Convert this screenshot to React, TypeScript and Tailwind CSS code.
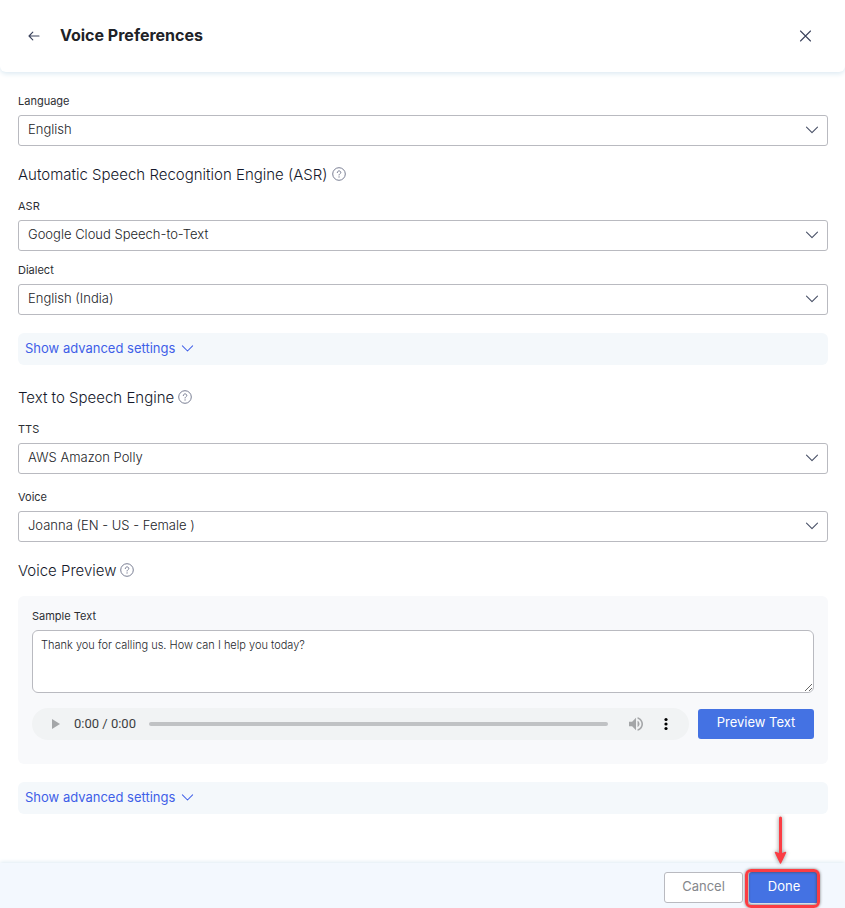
import { useState } from 'react'
import type { ReactNode } from 'react'

interface SelectFieldProps {
  id: string
  label: string
  options: string[]
}

function ChevronIcon({ className }: { className: string }) {
  return (
    <svg viewBox="0 0 14 14" fill="none" className={className} aria-hidden="true">
      <path d="M1.500 4.200 7 9.700l5.500-5.500" stroke="currentColor" strokeWidth="1.1" strokeLinecap="round" strokeLinejoin="round" />
    </svg>
  )
}

function HelpIcon() {
  return (
    <svg viewBox="0 0 14 14" fill="none" className="block size-[14px] text-[#6b7088]" aria-hidden="true">
      <circle cx="7" cy="7" r="6.300" stroke="currentColor" strokeWidth="0.9" />
      <path
        d="M5.300 5.600c0-1 .8-1.700 1.750-1.700s1.750.7 1.750 1.600c0 1.200-1.750 1.250-1.750 2.500"
        stroke="currentColor"
        strokeWidth="0.9"
        strokeLinecap="round"
      />
      <circle cx="7.050" cy="9.900" r="0.600" fill="currentColor" />
    </svg>
  )
}

function SelectField({ id, label, options }: SelectFieldProps) {
  const [value, setValue] = useState(options[0])

  return (
    <div>
      <label htmlFor={id} className="block text-[11px] leading-4 text-[#2c2e33]">
        {label}
      </label>
      <div className="relative mt-1.5">
        <select
          id={id}
          value={value}
          onChange={(e) => setValue(e.target.value)}
          className="block h-[31px] w-full appearance-none rounded-[3px] border border-[#b9bac0] bg-white pr-8 pb-0.5 pl-[9px] text-[13px] font-light text-[#222428] focus:border-[#4472e3] focus:outline-none"
        >
          {options.map((option) => (
            <option key={option} value={option}>
              {option}
            </option>
          ))}
        </select>
        <ChevronIcon className="pointer-events-none absolute top-2 right-[9px] size-[14px] text-[#4a5268]" />
      </div>
    </div>
  )
}

function SectionHeading({ children }: { children: ReactNode }) {
  return (
    <div className="flex items-center gap-1">
      <h2 className="text-[15px] leading-5 font-light text-[#15192b]">{children}</h2>
      <button type="button" aria-label="Help" className="pb-0.5">
        <HelpIcon />
      </button>
    </div>
  )
}

function AdvancedToggle() {
  return (
    <button
      type="button"
      className="flex h-8 w-full items-center gap-1.5 rounded-md bg-[#f4f8fb] px-[7px] text-[13px] text-[#3f5fe8]"
    >
      Show advanced settings
      <ChevronIcon className="mb-0.5 size-[13px]" />
    </button>
  )
}

function AudioPlayer() {
  const [position, setPosition] = useState(0)

  return (
    <div className="flex h-8 min-w-0 flex-1 items-center rounded-full bg-[#f1f3f4] pr-[18px] pl-[19px]">
      <button type="button" aria-label="Play" disabled className="text-[#a4a6a8]">
        <svg viewBox="0 0 10 10" className="size-[10px]" aria-hidden="true">
          <path d="M1 0v10l8-5z" fill="currentColor" />
        </svg>
      </button>
      <span className="ml-[13px] font-[Roboto,sans-serif] text-[13px] text-[#3c3e41]">0:00 / 0:00</span>
      <input
        type="range"
        aria-label="Seek"
        min={0}
        max={100}
        value={position}
        onChange={(e) => setPosition(Number(e.target.value))}
        className="mr-[21px] ml-[13px] h-1 min-w-0 flex-1 appearance-none rounded-full bg-[#c0c2c4] [&::-webkit-slider-thumb]:size-0 [&::-webkit-slider-thumb]:appearance-none"
      />
      <button type="button" aria-label="Mute" disabled className="text-[#a4a6a8]">
        <svg viewBox="3 3 18 18" className="size-[14px]" aria-hidden="true">
          <path
            d="M3 9v6h4l5 5V4L7 9H3zm13.500 3c0-1.770-1.020-3.290-2.500-4.030v8.050c1.480-.73 2.500-2.250 2.500-4.020zM14 3.230v2.060c2.890.86 5 3.540 5 6.710s-2.110 5.850-5 6.710v2.060c4.010-.91 7-4.490 7-8.770s-2.990-7.860-7-8.770z"
            fill="currentColor"
          />
        </svg>
      </button>
      <button type="button" aria-label="More options" className="ml-[18px] text-black">
        <svg viewBox="0 0 10 14" className="h-[14px] w-[10px]" aria-hidden="true">
          <circle cx="5" cy="2.500" r="1.600" fill="currentColor" />
          <circle cx="5" cy="7" r="1.600" fill="currentColor" />
          <circle cx="5" cy="11.500" r="1.600" fill="currentColor" />
        </svg>
      </button>
    </div>
  )
}

export default function App() {
  const [sample, setSample] = useState('Thank you for calling us. How can I help you today?')

  return (
    <div className="flex min-h-screen flex-col bg-white font-['Inter',sans-serif]">
      <header className="flex h-[72px] items-center rounded-b-md pr-8 pl-7 shadow-[0_2px_5px_#deebf3]">
        <button type="button" aria-label="Back" className="text-[#3b435c]">
          <svg viewBox="0 0 12 12" fill="none" className="size-3" aria-hidden="true">
            <path d="M11 6H1m3.800-3.800L1 6l3.800 3.800" stroke="currentColor" strokeWidth="1.1" strokeLinecap="round" strokeLinejoin="round" />
          </svg>
        </button>
        <h1 className="ml-5 pb-0.5 text-base leading-6 font-bold text-[#202227]">Voice Preferences</h1>
        <button type="button" aria-label="Close" className="ml-auto text-[#3b435c]">
          <svg viewBox="0 0 14 14" fill="none" className="size-[14px]" aria-hidden="true">
            <path d="m1.500 2 10 10M11.500 2l-10 10" stroke="currentColor" strokeWidth="1.1" strokeLinecap="round" />
          </svg>
        </button>
      </header>

      <main className="flex-1 pt-[21px] pr-[17px] pb-12 pl-[18px]">
        <SelectField id="language" label="Language" options={['English']} />

        <section className="mt-[19px]">
          <SectionHeading>Automatic Speech Recognition Engine (ASR)</SectionHeading>
          <div className="mt-[13px] mb-[18px] space-y-[11px]">
            <SelectField id="asr" label="ASR" options={['Google Cloud Speech-to-Text']} />
            <SelectField id="dialect" label="Dialect" options={['English (India)']} />
          </div>
          <AdvancedToggle />
        </section>

        <section className="mt-[23px]">
          <SectionHeading>Text to Speech Engine</SectionHeading>
          <div className="mt-[13px] space-y-[15px]">
            <SelectField id="tts" label="TTS" options={['AWS Amazon Polly']} />
            <SelectField id="voice" label="Voice" options={['Joanna (EN - US - Female )']} />
          </div>
        </section>

        <section className="mt-[19px]">
          <SectionHeading>Voice Preview</SectionHeading>
          <div className="mt-[15px] mb-[18px] rounded-md bg-[#f8f9fb] px-[14px] pt-3 pb-6">
            <label htmlFor="sample" className="block text-[11px] leading-4 text-[#2c2e33]">
              Sample Text
            </label>
            <textarea
              id="sample"
              value={sample}
              onChange={(e) => setSample(e.target.value)}
              className="mt-1.5 block h-[63px] w-full rounded-md border border-[#b9bac0] bg-white px-2 py-1.5 text-[11px] leading-4 font-light text-[#25272b] focus:outline-none"
            />
            <div className="mt-[15px] flex items-center gap-[9px]">
              <AudioPlayer />
              <button
                type="button"
                className="h-[30px] w-[116px] rounded-[3px] bg-[#4472e3] pb-0.5 text-[13px] text-white"
              >
                Preview Text
              </button>
            </div>
          </div>
          <AdvancedToggle />
        </section>
      </main>

      <footer className="flex justify-end gap-1.5 bg-[#f3f8fe] pt-[9px] pr-[26px] pb-[5px] shadow-[0_-1px_4px_#deebf3]">
        <button
          type="button"
          className="h-[31px] w-[79px] rounded-[3px] border border-[#b9bac0] bg-white pb-0.5 text-[13px] text-[#85878c]"
        >
          Cancel
        </button>
        <div className="relative">
          <button
            type="button"
            className="h-[31px] w-[70px] rounded-[3px] bg-[#4472e3] pb-0.5 text-[13px] text-white"
          >
            Done
          </button>
          {/* callout frame and arrow around the confirm button */}
          <div className="pointer-events-none absolute -top-[3px] -right-px -bottom-[5px] -left-1 rounded-md border-[3px] border-[#fb3d43] shadow-[0_0_3px_#777,inset_0_0_3px_#444]" />
          <svg
            viewBox="0 0 20 54"
            fill="none"
            className="pointer-events-none absolute -top-[59px] left-[21px] h-[54px] w-5 drop-shadow-[0_0_2px_#888]"
            aria-hidden="true"
          >
            <path d="M10.500 5v38" stroke="#fb3d43" strokeWidth="3" strokeLinecap="round" />
            <path d="m10.500 50-5-10.500 5 2 5-2z" fill="#fb3d43" stroke="#fb3d43" strokeWidth="1.500" strokeLinejoin="round" />
          </svg>
        </div>
      </footer>
    </div>
  )
}
